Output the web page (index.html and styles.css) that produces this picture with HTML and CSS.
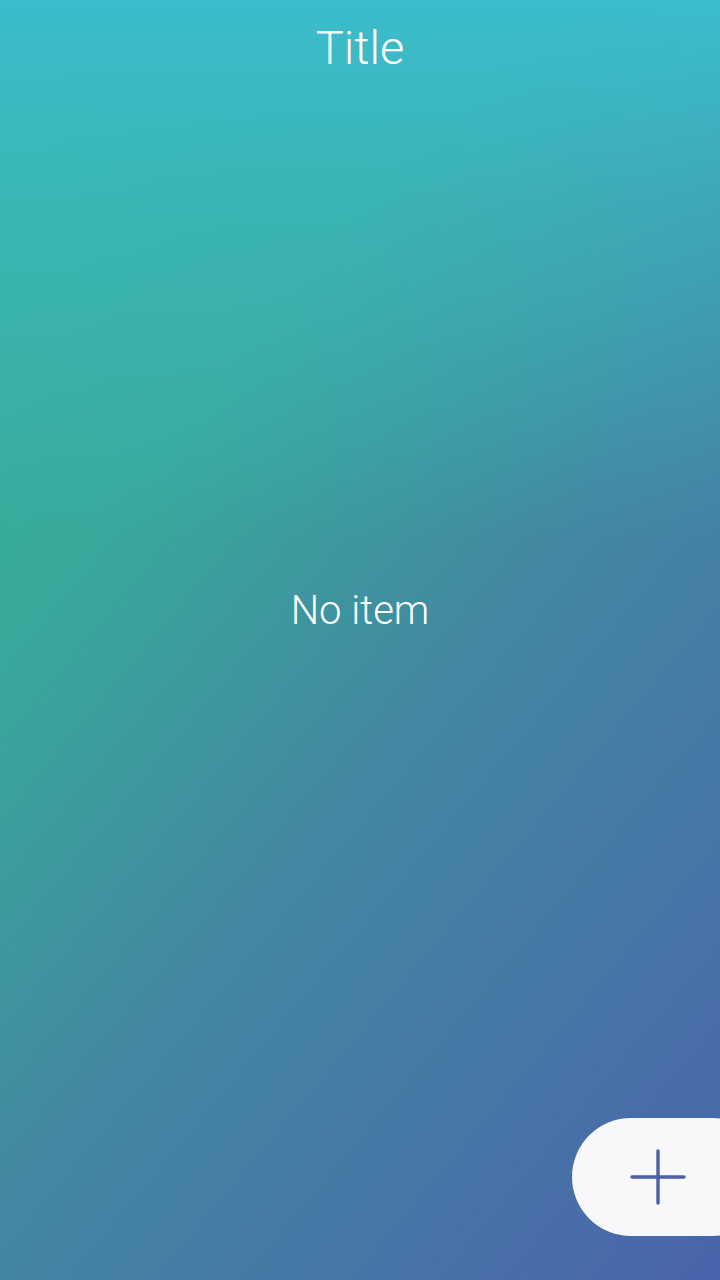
FILE: index.html
```html
<!DOCTYPE html>
<html>
<head>
<meta charset="utf-8">
<link rel="stylesheet" href="styles.css">
</head>
<body>
<div class="screen">
  <header class="title-bar"><h1 class="title">Title</h1></header>
  <main class="content"><p class="empty">No item</p></main>
  <button class="fab" aria-label="Add">
    <svg width="56" height="56" viewBox="0 0 56 56"><path d="M28 2V54M2 28H54" stroke="#4B5FAA" stroke-width="3.4" stroke-linecap="round"/></svg>
  </button>
</div>
</body>
</html>
```
FILE: styles.css
```css
html, body { margin: 0; padding: 0; }
body { font-family: Roboto, "Noto Sans", sans-serif; }
.screen {
  position: relative;
  width: 720px;
  height: 1280px;
  overflow: hidden;
  display: flex;
  flex-direction: column;
  background:
    linear-gradient(180deg, rgba(60,188,204,1) 0%, rgba(60,188,204,0.55) 15%, rgba(60,188,204,0) 42%),
    linear-gradient(130deg, #36B39A 0%, #38AA9A 30%, #4289A1 55%, #4A64AB 100%);
}
.title-bar { height: 96px; display: flex; justify-content: center; align-items: flex-start; }
.title { margin: 20px 0 0; font-weight: 300; font-size: 47px; color: #fff; line-height: 56px; }
.content { flex: 1; display: flex; justify-content: center; align-items: flex-start; }
.empty { margin: 491px 0 0; font-size: 40px; font-weight: 300; color: #fff; line-height: 48px; }
.fab {
  position: absolute;
  left: 572px; top: 1118px;
  width: 200px; height: 118px;
  border: none; border-radius: 59px;
  background: #F8F8FA;
  padding: 0 0 0 58px;
  display: flex; align-items: center;
}
```
